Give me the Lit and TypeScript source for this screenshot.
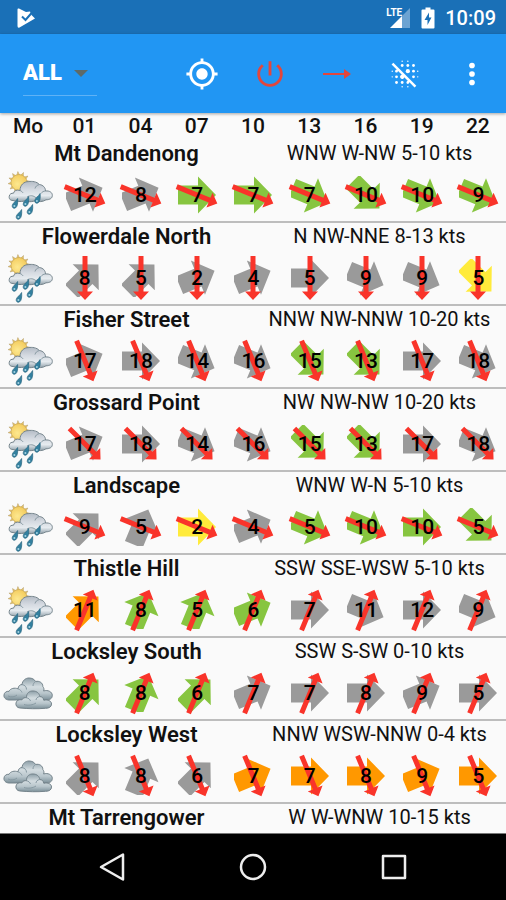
import { LitElement, html, svg, css } from "lit";
import { customElement, property } from "lit/decorators.js";

type Tone = "gray" | "green" | "yellow" | "orange";
type Reading = [speed: number, angle: number, tone: Tone];

interface Site {
  name: string;
  summary: string;
  sky?: "rain" | "cloud";
  wind: number;
  readings: Reading[];
}

const HOURS = ["01", "04", "07", "10", "13", "16", "19", "22"];

// Angles are in degrees, clockwise from east.
const SITES: Site[] = [
  {
    name: "Mt Dandenong", summary: "WNW W-NW 5-10 kts", sky: "rain", wind: 22.5,
    readings: [[12, -22.5, "gray"], [8, -22.5, "gray"], [7, 0, "green"], [7, 0, "green"],
      [7, 22.5, "green"], [10, 45, "green"], [10, 22.5, "green"], [9, 22.5, "green"]],
  },
  {
    name: "Flowerdale North", summary: "N NW-NNE 8-13 kts", sky: "rain", wind: 90,
    readings: [[8, -45, "gray"], [5, -45, "gray"], [2, -22.5, "gray"], [4, -22.5, "gray"],
      [5, 0, "gray"], [9, 22.5, "gray"], [9, 22.5, "gray"], [5, 45, "yellow"]],
  },
  {
    name: "Fisher Street", summary: "NNW NW-NNW 10-20 kts", sky: "rain", wind: 67.5,
    readings: [[17, -22.5, "gray"], [18, 0, "gray"], [14, 22.5, "gray"], [16, 22.5, "gray"],
      [15, 45, "green"], [13, 45, "green"], [17, 0, "gray"], [18, 22.5, "gray"]],
  },
  {
    name: "Grossard Point", summary: "NW NW-NW 10-20 kts", sky: "rain", wind: 45,
    readings: [[17, -22.5, "gray"], [18, 0, "gray"], [14, 22.5, "gray"], [16, 22.5, "gray"],
      [15, 45, "green"], [13, 45, "green"], [17, 0, "gray"], [18, 22.5, "gray"]],
  },
  {
    name: "Landscape", summary: "WNW W-N 5-10 kts", sky: "rain", wind: 22.5,
    readings: [[9, -45, "gray"], [5, -67.5, "gray"], [2, 0, "yellow"], [4, -22.5, "gray"],
      [5, 22.5, "green"], [10, 22.5, "green"], [10, 0, "green"], [5, 45, "green"]],
  },
  {
    name: "Thistle Hill", summary: "SSW SSE-WSW 5-10 kts", sky: "rain", wind: -67.5,
    readings: [[11, -45, "orange"], [8, -67.5, "green"], [5, -67.5, "green"], [6, -22.5, "green"],
      [7, 0, "gray"], [11, 22.5, "gray"], [12, 0, "gray"], [9, 22.5, "gray"]],
  },
  {
    name: "Locksley South", summary: "SSW S-SW 0-10 kts", sky: "cloud", wind: -67.5,
    readings: [[8, -45, "green"], [8, -67.5, "green"], [6, -45, "green"], [7, -22.5, "gray"],
      [7, 0, "gray"], [8, 0, "gray"], [9, -22.5, "gray"], [5, 0, "gray"]],
  },
  {
    name: "Locksley West", summary: "NNW WSW-NNW 0-4 kts", sky: "cloud", wind: 67.5,
    readings: [[8, -45, "gray"], [8, -67.5, "gray"], [6, -45, "gray"], [7, -22.5, "orange"],
      [7, 0, "orange"], [8, 0, "orange"], [9, -22.5, "orange"], [5, 0, "orange"]],
  },
  { name: "Mt Tarrengower", summary: "W W-WNW 10-15 kts", wind: 0, readings: [] },
];

@customElement("sky-icon")
class SkyIcon extends LitElement {
  @property() kind = "rain";

  static styles = css`
    :host { display: block; }
    svg { display: block; margin: 0 auto; }
    .ray { fill: #eec65c; stroke: #b39f72; stroke-width: 0.5; }
    .sun { fill: url(#sun); stroke: #c9a95c; stroke-width: 0.8; }
    .cloud { fill: url(#cloud); stroke: #74838b; stroke-width: 1; stroke-linejoin: round; }
    .dark { fill: url(#dark); }
    .fold { fill: none; stroke: #8799a2; stroke-width: 1; }
    .drop { fill: #33809f; stroke: #2a6580; stroke-width: 0.7; }
    .shine { fill: #a5d3e3; }
  `;

  private defs() {
    return svg`<defs>
      <radialGradient id="sun" cx="0.4" cy="0.6" r="0.7">
        <stop offset="0" stop-color="#fde88f"></stop><stop offset="1" stop-color="#f2c857"></stop>
      </radialGradient>
      <linearGradient id="cloud" x1="0" y1="0" x2="0" y2="1">
        <stop offset="0" stop-color="#b4bcc6"></stop><stop offset="0.4" stop-color="#d5dae1"></stop>
        <stop offset="0.7" stop-color="#e6ebef"></stop><stop offset="1" stop-color="#8f9fa9"></stop>
      </linearGradient>
      <linearGradient id="dark" x1="0" y1="0" x2="0" y2="1">
        <stop offset="0" stop-color="#8d9fa8"></stop><stop offset="0.4" stop-color="#d3dce0"></stop>
        <stop offset="0.7" stop-color="#b8c5cb"></stop><stop offset="1" stop-color="#7c9099"></stop>
      </linearGradient>
    </defs>`;
  }

  private rain() {
    const rays = Array.from({ length: 12 }, (_, i) =>
      svg`<path class="ray" d="M17.500 8.500L19 4.500L20.500 8.500z" transform="rotate(${i * 30 - 6} 19 15.500)"></path>`);
    const drops = [[15, 37], [26, 35], [37.5, 32], [19, 48], [30, 43]].map(([x, y]) => svg`
      <g transform="translate(${x} ${y})">
        <path class="drop" d="M2.600 -5.500C3 -1 2.600 2.600 .4 4C-1.600 5 -3.400 3.200 -2.600 1C-2 -1.200 1 -2.600 2.600 -5.500z"></path>
        <circle class="shine" cx="-0.600" cy="2" r="1"></circle>
      </g>`);
    return svg`${rays}<circle class="sun" cx="19" cy="15.500" r="8"></circle>
      <path class="cloud" d="M13 33.500C9.500 33.500 8.800 31 9.300 29C9.600 27 11.500 26 13.500 26.200C14 23.500 17 22.500 20 23.500
        C20 18 24 14.500 28.500 14.600C32 14 36.500 14.500 39.500 17.500C43 18 45.500 20.500 45.500 24C49.500 23.500 52.500 25.500 52.300 28.500
        C52.300 31.500 49.500 32.800 46 32.800C43 35 38 35 34.500 34C31 35 27 35 24.500 34C20.500 35 16.500 34.500 13 33.500z"></path>
      <path class="fold" d="M20 23.500C21.500 24 22.500 25 23 26M39.500 17.500C37 18 35.500 19.500 35 21.500M45.500 24C43.500 24 42 25 41 26.500M27 30C30 28 34 28.500 36 31"></path>
      ${drops}`;
  }

  private cloudy() {
    return svg`
      <path class="cloud dark" d="M9 35C5.500 34.800 3.600 32.500 4 30C4.200 27.500 6.500 26 9 26.300C10.500 23.300 14.500 22.500 18 23.800
        C18.300 21 20 19.500 22 19.500C22.500 15.500 25.500 13 29 13C32 13 34.500 14.300 35.500 16.500C39.500 15.500 43 18 42.800 21.500
        C44 23 44.300 24.500 43.600 26C48 24.500 52.300 27 52.300 30.300C52.300 33.500 50 35 46 35z"></path>
      <path class="fold" d="M22 19.500C25 20 26.500 22 26.500 24.500M35.500 16.500C34 17.500 33 19 33 21M18 23.800C20 24.500 21.500 26 22 27.500M8 31C11 32.500 15 32 17 30"></path>
      <path class="cloud dark" d="M20 43C17 42.800 15.500 40.500 16 38C16.300 35.500 19 34.200 22 34.800C22.500 33 25 32.300 26.500 32.800
        C26.300 28 29.500 25.800 33 26C37 26 39.600 28.500 39.600 31.500C42 31.500 43.500 33 43.800 35.300C48 34.200 51.500 36 51.500 39
        C51.500 42 49 43.300 45.500 43.300C37 44 28 43.800 20 43z"></path>
      <path class="fold" d="M26.500 32.800C28.500 33 30 34.500 30.500 36M39.600 31.500C37.500 31.800 36 33.500 36 35M24 39.500C28 41 33 40 36 38"></path>`;
  }

  render() {
    return html`<svg width="56" height="54" viewBox="0 0 56 54" aria-hidden="true">
      ${this.defs()}${this.kind === "rain" ? this.rain() : this.cloudy()}
    </svg>`;
  }
}

@customElement("wind-mark")
class WindMark extends LitElement {
  @property({ type: Number }) speed = 0;
  @property({ type: Number }) angle = 0;
  @property({ type: Number }) wind = 0;
  @property() tone: Tone = "gray";

  static styles = css`
    :host { display: grid; place-items: center; height: 54px; padding: 1px 0 0 1px; box-sizing: border-box; }
    svg, .speed { grid-area: 1 / 1; }
    svg { display: block; }
    .gray { fill: #9a9a9a; }
    .green { fill: #87c540; }
    .yellow { fill: #ffeb3b; }
    .orange { fill: #ff9800; }
    .wind { fill: #f9342a; }
    .speed { position: relative; font-size: 21px; line-height: 24px; font-weight: 500; color: #000; }
  `;

  render() {
    return html`
      <svg width="48" height="48" viewBox="-24 -24 48 48" aria-hidden="true">
        <svg x="-19" y="-19" width="38" height="38" viewBox="-19 -19 38 38">
          <path class=${this.tone} transform="rotate(${this.angle})" d="M-19 -9.500H1V-18.500L19 0L1 18.500V9.500H-19z"></path>
        </svg>
        <path class="wind" transform="rotate(${this.wind})" d="M-22 -2.500H13.500V-8L22 0L13.500 8V2.500H-22z"></path>
      </svg>
      <span class="speed">${this.speed}</span>`;
  }
}

@customElement("app-root")
class AppRoot extends LitElement {
  static styles = css`
    :host {
      display: flex; flex-direction: column; height: 100vh; overflow: hidden;
      background: #fafafa; color: #111; font-family: Roboto, "Liberation Sans", sans-serif;
    }
    svg { display: block; }
    button { border: 0; padding: 0; background: none; display: grid; place-items: center; }

    .status {
      flex: none; height: 34px; padding: 2px 10px 0 16px; box-sizing: border-box; background: #1a70b7; color: #fff;
      display: flex; align-items: center; justify-content: space-between;
    }
    .system { display: flex; align-items: center; }
    .lte { align-self: flex-start; font-size: 10px; line-height: 9px; font-weight: 700; }
    .signal { display: flex; margin-right: 11px; }
    .signal svg { margin-left: -12px; }
    .time { margin-left: 10px; font-size: 20px; line-height: 24px; font-weight: 500; }

    .bar {
      flex: none; height: 79px; background: #2196f3; display: grid; grid-template-columns: 1fr 2fr; align-items: center;
      box-shadow: 0 1px 3px rgba(0, 0, 0, 0.35); z-index: 1;
    }
    .filter { padding-left: 23px; }
    .picker { display: grid; width: 74px; height: 44px; border-bottom: 1px solid #5fb2f6; align-items: center; }
    .picker select, .picker svg { grid-area: 1 / 1; }
    .picker svg { justify-self: end; margin-right: 9px; pointer-events: none; }
    select {
      appearance: none; border: 0; padding: 0; margin: 0; width: 100%; background: none; color: #fff;
      font-family: inherit; font-size: 22px; line-height: 28px; font-weight: 900;
    }
    .tools { display: grid; grid-template-columns: repeat(5, 1fr); height: 100%; }
    .white { fill: #fff; }
    .red { fill: #e2463c; }

    main { flex: 1; min-height: 0; overflow: hidden; border-bottom: 1px solid #777; }
    table { width: 100%; table-layout: fixed; border-collapse: separate; border-spacing: 0; }
    th, td { padding: 0; text-align: center; }
    thead th { height: 27px; font-size: 21px; line-height: 27px; font-weight: 500; }
    .title { display: grid; grid-template-columns: 1fr 1fr; height: 27px; line-height: 27px; }
    .name { font-size: 22px; font-weight: 600; }
    .summary { font-size: 20px; font-weight: 400; }
    .marks td { border-bottom: 2px solid #bdbdbd; }

    nav {
      flex: none; height: 66px; padding: 0 8.3333%; background: #000;
      display: grid; grid-template-columns: repeat(3, 1fr);
    }
    .key { fill: none; stroke: #eee; stroke-width: 2.5; stroke-linejoin: round; }
  `;

  private dot = ([x, y, r]: number[]) => svg`<circle cx=${x} cy=${y} r=${r}></circle>`;

  private statusBar() {
    return html`<header class="status">
      <svg width="20" height="22" viewBox="0 0 20 22" aria-hidden="true">
        <path class="white" d="M1.500 2.500Q1.500 1 3 1.600L10 5L14 4.500L15.500 8L19 11.500L3.500 20.600Q1.500 21.400 1.500 19z"></path>
        <path d="M6 9.500L9.500 13L16 5.500" fill="none" stroke="#1a70b7" stroke-width="2"></path>
      </svg>
      <div class="system">
        <div class="signal">
          <span class="lte">LTE</span>
          <svg width="20" height="20" viewBox="0 0 20 20" aria-hidden="true">
            <path d="M12 8L20 0V20H12z" fill="#6ca3d2"></path>
            <path class="white" d="M0 20L12 8V20z"></path>
          </svg>
        </div>
        <svg width="14" height="22" viewBox="0 0 14 22" aria-hidden="true">
          <path class="white" d="M4.500 0.500H9.500V2.500H12.500Q13.500 2.500 13.500 3.500V20.500Q13.500 21.500 12.500 21.500H1.500Q.5 21.500 .5 20.500V3.500Q.5 2.500 1.500 2.500H4.500z"></path>
          <path d="M8 5.500L3.500 13H6.500V18L10.500 10.500H8z" fill="#1a70b7"></path>
        </svg>
        <span class="time">10:09</span>
      </div>
    </header>`;
  }

  private appBar() {
    const specks = [
      [10, 3, 0.5], [14, 3, 0.5], [3, 10, 0.5], [3, 14, 0.5], [21, 10, 0.5], [21, 14, 0.5], [10, 21, 0.5], [14, 21, 0.5],
      [10, 6, 1], [14, 6, 1], [18, 6, 1], [18, 10, 1], [18, 14, 1], [6, 14, 1], [6, 18, 1], [10, 18, 1], [14, 10, 1.5],
    ];
    return html`<div class="bar">
      <div class="filter">
        <div class="picker">
          <select aria-label="Sites"><option>ALL</option></select>
          <svg width="14" height="7" viewBox="0 0 14 7" aria-hidden="true"><path d="M0 0H14L7 7z" fill="#5d6a68"></path></svg>
        </div>
      </div>
      <div class="tools">
        <button aria-label="My location">
          <svg class="white" width="34" height="34" viewBox="0 0 24 24">
            <path d="M12 8c-2.210 0-4 1.790-4 4s1.790 4 4 4 4-1.790 4-4-1.790-4-4-4zm8.940 3c-.46-4.170-3.770-7.480-7.940-7.940V1h-2v2.060C6.830 3.520 3.520 6.830 3.060 11H1v2h2.060c.46 4.170 3.770 7.480 7.940 7.940V23h2v-2.060c4.170-.46 7.480-3.770 7.940-7.940H23v-2h-2.060zM12 19c-3.870 0-7-3.130-7-7s3.130-7 7-7 7 3.130 7 7-3.130 7-7 7z"></path>
          </svg>
        </button>
        <button aria-label="Power">
          <svg class="red" width="34" height="34" viewBox="0 0 24 24">
            <path d="M13 3h-2v10h2V3zm4.830 2.170l-1.420 1.420C17.990 7.860 19 9.810 19 12c0 3.870-3.130 7-7 7s-7-3.130-7-7c0-2.190 1.010-4.140 2.580-5.420L6.170 5.170C4.230 6.820 3 9.260 3 12c0 4.970 4.030 9 9 9s9-4.030 9-9c0-2.740-1.230-5.180-3.170-6.830z"></path>
          </svg>
        </button>
        <button aria-label="Wind direction">
          <svg class="red" width="28" height="12" viewBox="0 0 28 12">
            <path d="M0 5H21V1L28 6L21 11V7H0z"></path>
          </svg>
        </button>
        <button aria-label="Blur off">
          <svg class="white" width="34" height="34" viewBox="0 0 24 24">
            <path d="M2.500 5.270l3.780 3.780L6 9c-.55 0-1 .45-1 1s.45 1 1 1 1-.45 1-1c0-.1-.03-.19-.06-.28l2.810 2.810c-.71.11-1.250.73-1.250 1.470 0 .83.67 1.500 1.500 1.500.74 0 1.360-.54 1.470-1.250l2.810 2.810c-.09-.03-.18-.06-.28-.06-.55 0-1 .45-1 1s.45 1 1 1 1-.45 1-1c0-.1-.03-.19-.06-.28l3.780 3.780L20 20.230 3.770 4 2.500 5.270z"></path>
            ${specks.map(this.dot)}
          </svg>
        </button>
        <button aria-label="More options">
          <svg class="white" width="34" height="34" viewBox="0 0 24 24">${[[12, 6, 2], [12, 12, 2], [12, 18, 2]].map(this.dot)}</svg>
        </button>
      </div>
    </div>`;
  }

  private site(s: Site) {
    return html`<tbody>
      <tr><th colspan="9" scope="rowgroup"><div class="title"><span class="name">${s.name}</span><span class="summary">${s.summary}</span></div></th></tr>
      ${s.sky ? html`<tr class="marks">
        <td><sky-icon .kind=${s.sky}></sky-icon></td>
        ${s.readings.map(([speed, angle, tone]) => html`<td>
          <wind-mark .speed=${speed} .angle=${angle} .tone=${tone} .wind=${s.wind}></wind-mark>
        </td>`)}
      </tr>` : null}
    </tbody>`;
  }

  render() {
    return html`
      ${this.statusBar()}
      ${this.appBar()}
      <main>
        <table>
          <thead><tr><th scope="col">Mo</th>${HOURS.map((h) => html`<th scope="col">${h}</th>`)}</tr></thead>
          ${SITES.map((s) => this.site(s))}
        </table>
      </main>
      <nav>
        <button aria-label="Back"><svg class="key" width="28" height="30" viewBox="0 0 28 30"><path d="M25 2.500V27.500L3 15z"></path></svg></button>
        <button aria-label="Home"><svg class="key" width="28" height="28" viewBox="0 0 28 28"><circle cx="14" cy="14" r="12"></circle></svg></button>
        <button aria-label="Recent apps"><svg class="key" width="28" height="28" viewBox="0 0 28 28"><rect x="3" y="3" width="22" height="22"></rect></svg></button>
      </nav>`;
  }
}
